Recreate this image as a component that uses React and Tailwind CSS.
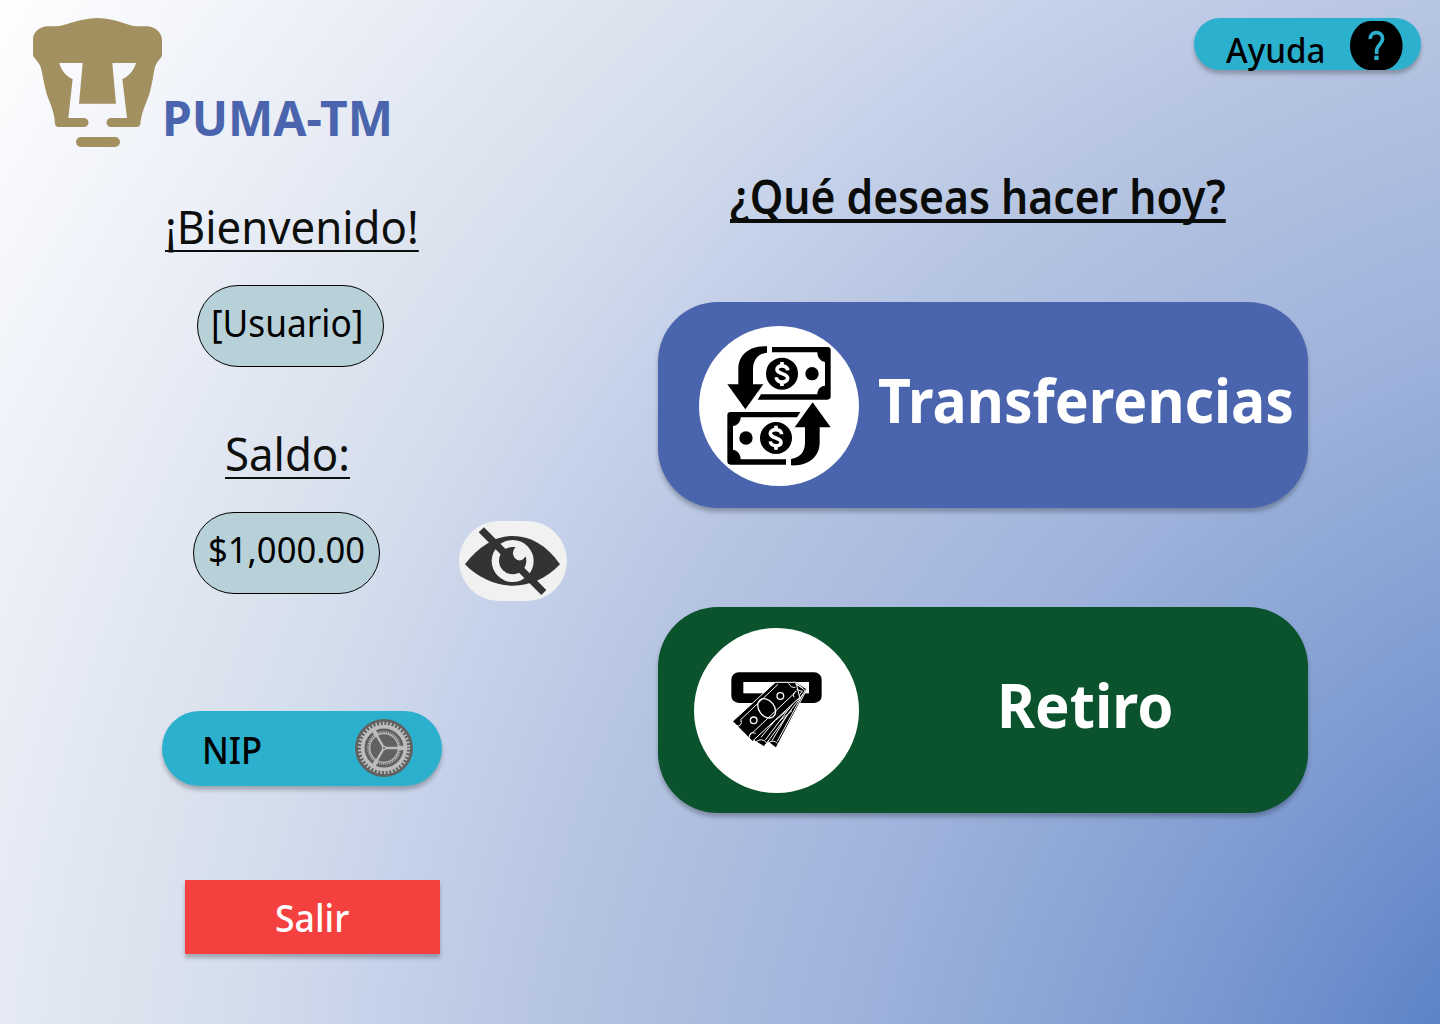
import React from "react";

function PumaLogo() {
  return (
    <svg viewBox="39 54 387 387" className="block h-[129px] w-[129px] shrink-0" fill="#a39061">
      <path d="M39 118C39 96 60 80 82 79L108 79C135 78 175 55 232 54C290 55 325 78 350 79L382 79C405 80 426 98 426 120V168C418 180 408 188 404 205C398 235 398 245 390 275C382 305 365 330 361 372Q359 381 351 381H273A13.5 13.5 0 0 1 273 354H321L307 237C325 230 343 210 348 189H277L288 311H177L188 189H118C122 210 140 230 158 237L145 354H192A13.5 13.5 0 0 1 192 381H115Q107 381 105 372C103 325 83 300 77 270C70 240 68 225 63 205C58 188 48 180 39 168Z" />
      <rect x="168" y="411" width="132" height="30" rx="15" />
    </svg>
  );
}

function HelpIcon() {
  return (
    <svg viewBox="510 63 158 147" className="block h-[49px] w-[52.6px] shrink-0">
      <path d="M572 63H607C640 63 668 98 668 137C668 175 642 210 607 210H572C537 210 510 175 510 137C510 98 537 63 572 63Z" fill="#000" />
      <path d="M571 117C569 92 609 91 608 116C607 134 589 135 590 154V162" fill="none" stroke="#2bb0ce" strokeWidth="11" />
      <rect x="583" y="167" width="13" height="13" fill="#2bb0ce" />
    </svg>
  );
}

function BillWithArrow() {
  return (
    <g>
      <path d="M231 91C180 88 145 115 145 160V205H112L166 280L220 205H189V160C189 130 205 113 231 110Z" />
      <path d="M246 93H412Q422 93 422 103V241Q422 251 412 251H203L213 235H382C382 220 392 210 405 209V138C392 136 382 125 382 109H246Z" />
      <circle cx="276" cy="173" r="48" />
      <circle cx="366" cy="173" r="20" />
      <path d="M293 163C292 146 260 145 261 161C262 175 293 171 293 187C293 202 259 203 259 184M276 138V150M276 198V210" fill="none" stroke="#fff" strokeWidth="11" />
    </g>
  );
}

function TransferIcon() {
  return (
    <svg viewBox="27 30 480 480" className="block h-[160px] w-[160px] shrink-0">
      <circle cx="267" cy="270" r="240" fill="#fff" />
      <BillWithArrow />
      <g transform="rotate(180 267 269.500)">
        <BillWithArrow />
      </g>
    </svg>
  );
}

function WithdrawIcon() {
  return (
    <svg viewBox="12 24 495 495" className="block h-[165px] w-[165px] shrink-0">
      <circle cx="259.500" cy="271.500" r="247.500" fill="#fff" />
      <rect x="124" y="157" width="271" height="92" rx="22" />
      <rect x="160" y="186" width="197" height="34" fill="#fff" />
      <g stroke="#fff" strokeWidth="3" strokeLinejoin="round">
        <path d="M208 345L258 384L351 207L318 187Z" />
        <path d="M236 368Q250 358 262 370M246 362L338 207M262 364L346 209" fill="none" strokeWidth="3" />
        <path d="M165 345L222 380L346 212L314 187Z" />
        <path d="M198 365Q216 352 229 368M213 352L326 216M226 360L338 212" fill="none" strokeWidth="3" />
        <path d="M128 304L187 364L329 232L318 187H256Z" />
      </g>
      <g fill="none" stroke="#fff" strokeWidth="4">
        <path d="M151 300L264 193M176 349L316 217M138 318Q158 320 153 299M179 353Q176 333 197 340M296 190Q302 204 316 202M312 232Q306 218 320 213" strokeWidth="3" />
        <ellipse cx="230" cy="265" rx="23" ry="32" transform="rotate(-38 230 265)" />
        <circle cx="191" cy="301" r="10" />
        <circle cx="271" cy="228" r="10" />
        <path d="M258 300L300 264M270 302L306 272M316 192L338 204M320 208L336 214" strokeWidth="3" />
      </g>
    </svg>
  );
}

function GearIcon() {
  return (
    <svg viewBox="45 42 174 174" className="block h-[58px] w-[58px] shrink-0">
      <circle cx="132" cy="129" r="87" fill="#616161" />
      <g fill="none" stroke="#bdbdbd">
        <circle cx="132" cy="129" r="64" strokeWidth="11" />
        <circle cx="132" cy="129" r="73" strokeWidth="11" pathLength="84" strokeDasharray="0.9 1.1" />
        <circle cx="132" cy="129" r="43" strokeWidth="4" />
        <circle cx="132" cy="129" r="47.500" strokeWidth="6" pathLength="104" strokeDasharray="1 1" />
        <path d="M132 129H194M132 129L101 75.300M132 129L101 182.700" strokeWidth="7" />
        <path d="M176 129H196M110 91L100 74M110 167L100 184" strokeWidth="12" />
      </g>
      <circle cx="132" cy="129" r="7" fill="#bdbdbd" />
      <circle cx="132" cy="129" r="3" fill="#616161" />
    </svg>
  );
}

function HiddenIcon() {
  return (
    <svg viewBox="27 33 324 240" className="block h-[80px] w-[108px]" fill="#333">
      <path d="M45 163C90 105 140 78 189 78C240 78 290 105 330 163C290 205 240 227 189 227C140 227 85 205 45 163Z" />
      <circle cx="188" cy="153" r="63" fill="#f1f1f1" />
      <circle cx="188" cy="152" r="41" />
      <path d="M201 108Q185 120 190 136C194 152 214 157 223 143L236 132L224 112Z" fill="#f1f1f1" />
      <path d="M86 67L102 52L289 240L274 255Z" />
    </svg>
  );
}

const text = "block origin-left whitespace-nowrap leading-none";

function Sidebar() {
  return (
    <aside className="flex w-[658px] shrink-0 flex-col items-start">
      <header className="flex h-[147px] pt-[18px] pl-[33px]">
        <PumaLogo />
        <h1 className={`${text} mt-[76px] text-[48px] font-bold text-[#4a65ad]`}>PUMA-TM</h1>
      </header>

      <p className={`${text} mt-[57px] ml-[164.5px] scale-x-[.973] text-[45px] text-[#0d0f0d] underline decoration-2 underline-offset-[6px] [text-decoration-skip-ink:none]`}>
        ¡Bienvenido!
      </p>
      <div className="mt-[36px] ml-[197px] h-[82px] w-[187px] rounded-full border border-black bg-[#b8d1d9] pt-[17.5px] pl-[13px]">
        <span className={`${text} scale-x-[.94] text-[37.5px]`}>[Usuario]</span>
      </div>

      <p className={`${text} mt-[64px] ml-[225px] scale-x-[.973] text-[45px] text-[#0d0f0d] underline decoration-2 underline-offset-[6px] [text-decoration-skip-ink:none]`}>
        Saldo:
      </p>
      <div className="mt-[36px] ml-[193px] flex items-start">
        <div className="h-[82px] w-[187px] rounded-full border border-black bg-[#b8d1d9] pt-[17px] pl-[13.5px]">
          <span className={`${text} scale-x-[.935] text-[37px]`}>$1,000.00</span>
        </div>
        <button className="mt-[9px] ml-[79px] overflow-hidden rounded-[40px] bg-[#f1f1f1]">
          <HiddenIcon />
        </button>
      </div>

      <button className="mt-[110px] ml-[162px] flex h-[75px] w-[280px] items-start justify-between rounded-full bg-[#2bb0ce] pt-[8px] pr-[29px] pl-[40px] shadow-[0_4px_4px_rgba(0,0,0,0.25)]">
        <span className={`${text} mt-[11px] scale-x-[.91] text-[38px] font-medium`}>NIP</span>
        <GearIcon />
      </button>

      <button className="mt-[94px] ml-[185px] flex h-[74px] w-[255px] items-start bg-[#f54040] pt-[19px] pl-[90px] text-white shadow-[0_4px_4px_rgba(0,0,0,0.25)]">
        <span className={`${text} scale-x-[.95] text-[37.5px] font-medium`}>Salir</span>
      </button>
    </aside>
  );
}

function Actions() {
  return (
    <main className="flex flex-1 flex-col items-start">
      <button className="mt-[18px] mr-[19px] flex h-[52px] w-[227px] items-start self-end rounded-full bg-[#2bb0ce] pt-[3px] pl-[32px] shadow-[0_4px_4px_rgba(0,0,0,0.25)]">
        <span className={`${text} mt-[11.5px] w-[124px] scale-x-[.975] text-left text-[34px] font-medium`}>Ayuda</span>
        <HelpIcon />
      </button>

      <h2 className={`${text} mt-[103px] ml-[72px] scale-x-[.927] text-[46px] font-semibold text-[#0a0c0a] underline decoration-4 underline-offset-[5px] [text-decoration-skip-ink:none]`}>
        ¿Qué deseas hacer hoy?
      </h2>

      <button className="mt-[83px] flex h-[206px] w-[650px] items-start rounded-[60px] bg-[#4a65ad] pt-[24px] pl-[41px] text-white shadow-[0_4px_4px_rgba(0,0,0,0.25)]">
        <TransferIcon />
        <span className={`${text} mt-[42.5px] ml-[19px] w-[420px] scale-x-[.937] text-left text-[61px] font-bold`}>Transferencias</span>
      </button>

      <button className="mt-[99px] flex h-[206px] w-[650px] items-start rounded-[60px] bg-[#0a532d] pt-[21px] pl-[36px] text-white shadow-[0_4px_4px_rgba(0,0,0,0.25)]">
        <WithdrawIcon />
        <span className={`${text} mt-[45.5px] ml-[138px] scale-x-[.952] text-[61px] font-bold`}>Retiro</span>
      </button>
    </main>
  );
}

export default function App() {
  return (
    <div className="flex h-[1024px] w-[1440px] overflow-hidden bg-[radial-gradient(circle_2160px_at_1780px_1220px,#5b84c7_393px,#6b8dcd_491px,#7f9cd2_650px,#8fa8d5_804px,#a1b4dd_970px,#b5c4e1_1245px,#c5d1ea_1409px,#d3ddec_1552px,#dce3ef_1662px,#e5eaf4_1791px,#eff2f9_1928px,#fdfdfe_2130px,#ffffff_2160px)] font-['Noto_Sans',sans-serif] text-black">
      <Sidebar />
      <Actions />
    </div>
  );
}
